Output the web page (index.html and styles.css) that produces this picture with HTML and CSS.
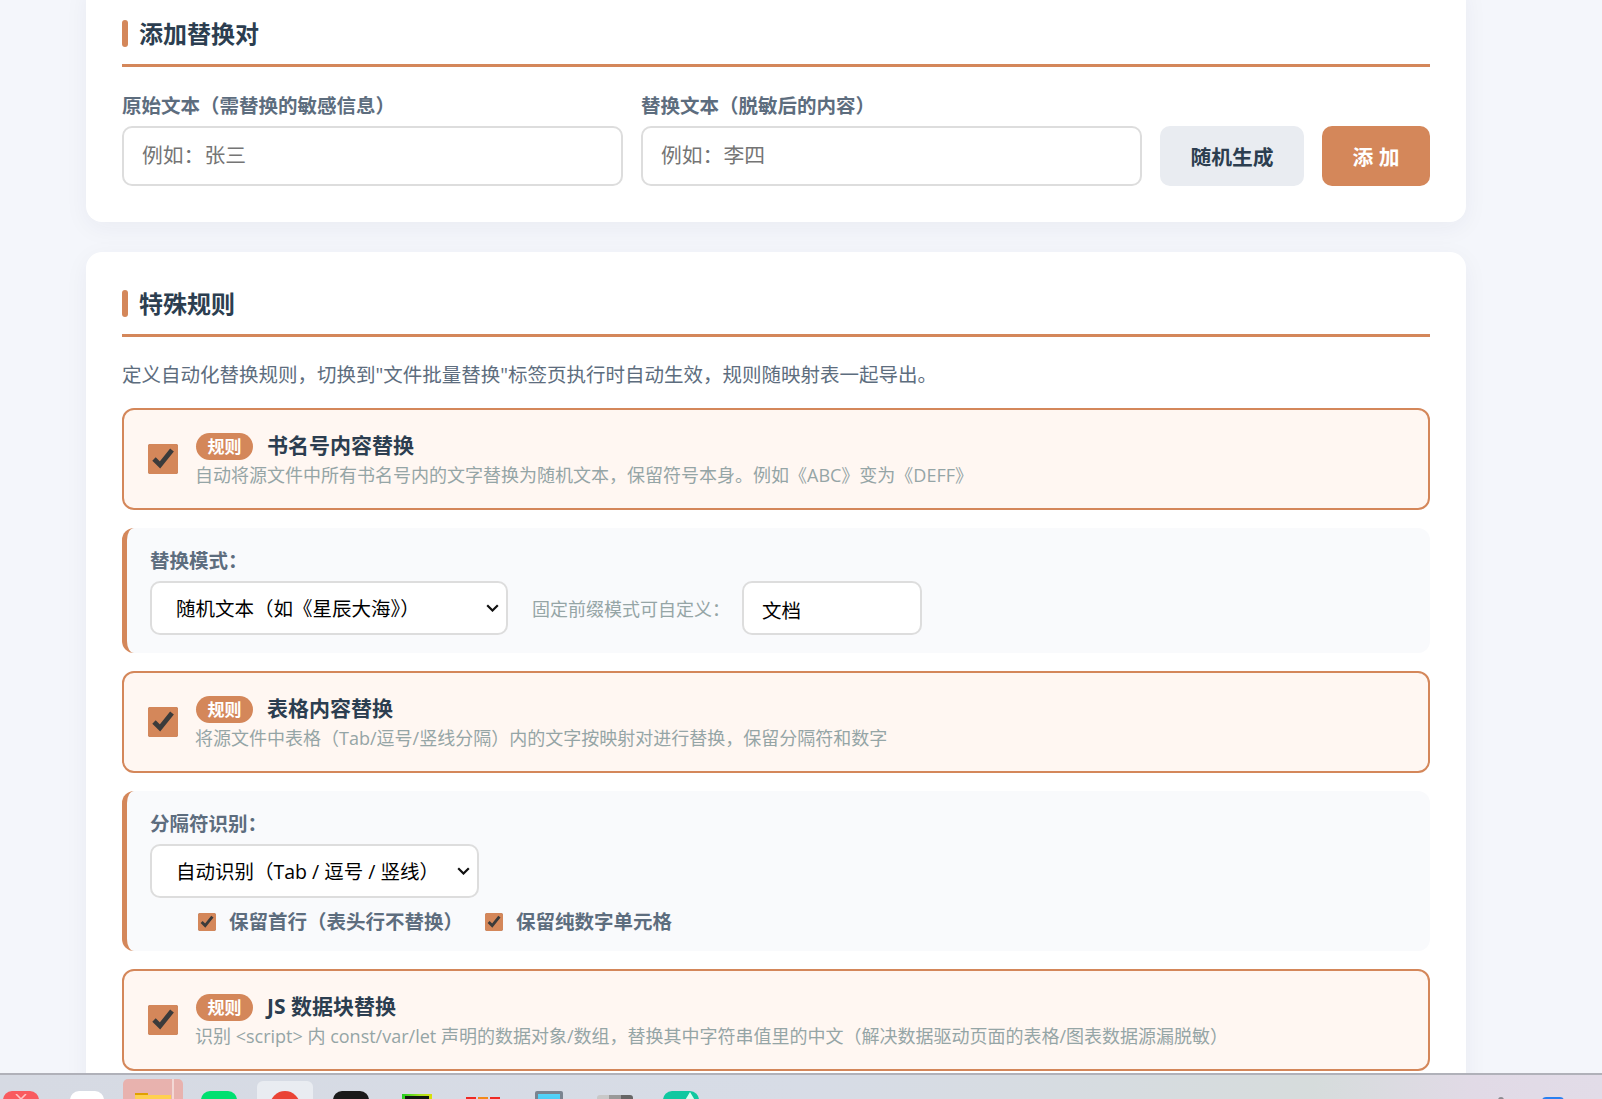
FILE: index.html
```html
<!DOCTYPE html>
<html lang="zh-CN">
<head>
<meta charset="utf-8">
<title>添加替换对</title>
<link rel="stylesheet" href="styles.css">
</head>
<body>
<main class="page">
  <section class="card">
    <h2 class="card-title">添加替换对</h2>
    <div class="pair-row">
      <div class="field">
        <label class="field-label">原始文本（需替换的敏感信息）</label>
        <input class="text-input" type="text" placeholder="例如：张三">
      </div>
      <div class="field">
        <label class="field-label">替换文本（脱敏后的内容）</label>
        <input class="text-input" type="text" placeholder="例如：李四">
      </div>
      <button class="btn btn-muted">随机生成</button>
      <button class="btn btn-primary">添 加</button>
    </div>
  </section>

  <section class="card">
    <h2 class="card-title">特殊规则</h2>
    <p class="intro">定义自动化替换规则，切换到"文件批量替换"标签页执行时自动生效，规则随映射表一起导出。</p>

    <div class="rule">
      <input class="rule-check" type="checkbox" checked>
      <div class="rule-body">
        <div class="rule-head"><span class="badge">规则</span><span class="rule-title">书名号内容替换</span></div>
        <div class="rule-desc">自动将源文件中所有书名号内的文字替换为随机文本，保留符号本身。例如《ABC》变为《DEFF》</div>
      </div>
    </div>

    <div class="options">
      <div class="options-label">替换模式：</div>
      <div class="options-row">
        <select class="select select-mode"><option>随机文本（如《星辰大海》）</option></select>
        <span class="hint">固定前缀模式可自定义：</span>
        <input class="prefix-input" type="text" value="文档">
      </div>
    </div>

    <div class="rule">
      <input class="rule-check" type="checkbox" checked>
      <div class="rule-body">
        <div class="rule-head"><span class="badge">规则</span><span class="rule-title">表格内容替换</span></div>
        <div class="rule-desc">将源文件中表格（Tab/逗号/竖线分隔）内的文字按映射对进行替换，保留分隔符和数字</div>
      </div>
    </div>

    <div class="options">
      <div class="options-label">分隔符识别：</div>
      <select class="select select-sep"><option>自动识别（Tab / 逗号 / 竖线）</option></select>
      <div class="checks">
        <label class="check-item"><input class="small-check" type="checkbox" checked>保留首行（表头行不替换）</label>
        <label class="check-item"><input class="small-check" type="checkbox" checked>保留纯数字单元格</label>
      </div>
    </div>

    <div class="rule">
      <input class="rule-check" type="checkbox" checked>
      <div class="rule-body">
        <div class="rule-head"><span class="badge">规则</span><span class="rule-title">JS 数据块替换</span></div>
        <div class="rule-desc">识别 &lt;script&gt; 内 const/var/let 声明的数据对象/数组，替换其中字符串值里的中文（解决数据驱动页面的表格/图表数据源漏脱敏）</div>
      </div>
    </div>
  </section>
</main>

<footer class="taskbar">
  <div class="slot"><div class="app app-red"><svg class="app-mark" viewBox="0 0 14 6" width="14" height="6"><path d="M2 0l5 5 5-5" fill="none" stroke="#ffc4c4" stroke-width="1.6"/></svg></div></div>
  <div class="slot"><div class="app app-white"></div></div>
  <div class="slot"><div class="tile-active"><div class="folder"></div></div></div>
  <div class="slot"><div class="app app-green"></div></div>
  <div class="slot"><div class="tile-hover"><div class="record"></div></div></div>
  <div class="slot"><div class="app app-black"></div></div>
  <div class="slot"><div class="app-frame"></div></div>
  <div class="slot"><div class="app-flag"><span class="flag-red"></span><span class="flag-orange"></span><span class="flag-red"></span></div></div>
  <div class="slot"><div class="app-monitor"></div></div>
  <div class="slot"><div class="app-strips"><span class="strip-a"></span><span class="strip-b"></span><span class="strip-c"></span></div></div>
  <div class="slot"><div class="app app-teal"><svg class="app-tri" viewBox="0 0 12 10" width="12" height="10"><path d="M6 0L12 10H0z" fill="#d8fff0"/></svg></div></div>
  <div class="tray">
    <span class="tray-dot"></span>
    <span class="tray-blue"></span>
  </div>
</footer>
</body>
</html>
```
FILE: styles.css
```css
* { box-sizing: border-box; }

html, body {
  margin: 0;
  height: 100%;
  overflow: hidden;
}

body {
  background: #f4f6fb;
  font-family: "Open Sans", "Noto Sans CJK SC", sans-serif;
  color: #2c3e50;
}

/* the page is scrolled a little: the first card starts above the window */
.page {
  height: calc(100vh + 18px);
  margin-top: -18px;
  padding: 0 136px 0 86px;
  overflow: hidden;
}

.card {
  background: #fff;
  border-radius: 16px;
  padding: 36px;
  margin-bottom: 30px;
  box-shadow: 0 6px 24px rgba(30, 40, 70, 0.05);
}

.card-title {
  display: flex;
  align-items: center;
  gap: 11px;
  margin: 0 0 24px;
  height: 49px;
  padding-bottom: 15px;
  border-bottom: 3px solid #d4875a;
  font-size: 24px;
  font-weight: 700;
  line-height: 31px;
  color: #2c3e50;
}

.card-title::before {
  content: "";
  width: 6px;
  height: 27px;
  border-radius: 3px;
  background: #d4875a;
}

.pair-row {
  display: flex;
  align-items: flex-end;
  gap: 18px;
}

.field {
  flex: 1;
  min-width: 0;
}

.field-label {
  display: block;
  margin-bottom: 5px;
  font-size: 19.5px;
  font-weight: 700;
  line-height: 30px;
  color: #5d6d7e;
}

.text-input {
  display: block;
  width: 100%;
  height: 60px;
  padding: 0 18px 2px;
  border: 2px solid #ddd;
  border-radius: 10px;
  font: inherit;
  font-size: 20.8px;
  background: #fff;
}

.btn {
  flex: none;
  height: 60px;
  padding: 0;
  border: 0;
  border-radius: 10px;
  font: inherit;
  font-size: 20.8px;
  font-weight: 700;
  white-space: nowrap;
}

.btn-muted { width: 144px; background: #e9ecf1; color: #2c3e50; }
.btn-primary { width: 108px; background: #d4875a; color: #fff; }

.intro {
  margin: 0 0 19px;
  font-size: 19.5px;
  line-height: 28px;
  color: #5d6d7e;
}

.rule {
  display: flex;
  align-items: center;
  gap: 18px;
  padding: 20px 24px;
  margin-bottom: 18px;
  border: 2px solid #d4875a;
  border-radius: 12px;
  background: #fff7f2;
}

.rule-check {
  flex: none;
  width: 30px;
  height: 30px;
  margin: 0;
  accent-color: #d4875a;
}

.rule-head {
  display: flex;
  align-items: center;
  gap: 14px;
  height: 32px;
}

.badge {
  padding: 0 11.5px;
  height: 27px;
  border-radius: 14px;
  background: #d4875a;
  color: #fff;
  font-size: 17px;
  font-weight: 700;
  line-height: 27px;
}

.rule-title {
  padding-bottom: 1px;
  font-size: 21px;
  font-weight: 700;
  line-height: 31px;
  color: #2c3e50;
}

.rule-desc {
  margin-left: -1px;
  font-size: 18px;
  line-height: 26px;
  color: #95a5a6;
}

.options {
  padding: 19px 24px 17px 23px;
  margin-bottom: 18px;
  border-left: 5px solid #d4875a;
  border-radius: 12px;
  background: #f9fafc;
}

.options-label {
  margin-bottom: 6px;
  font-size: 19.5px;
  font-weight: 700;
  line-height: 28px;
  color: #5d6d7e;
}

.options-row {
  display: flex;
  align-items: center;
  margin-bottom: 1px;
}

.select {
  display: block;
  height: 54px;
  padding: 0 30px 0 24px;
  border: 2px solid #ddd;
  border-radius: 10px;
  appearance: none;
  background: #fff url("data:image/svg+xml,%3Csvg xmlns='http://www.w3.org/2000/svg' viewBox='0 0 13 8'%3E%3Cpath d='M1.2 1.2l5.3 5.3 5.3-5.3' fill='none' stroke='%23111' stroke-width='2.2'/%3E%3C/svg%3E") no-repeat right 7px center / 13px 8px;
  color: #000;
  font: inherit;
  font-size: 19.5px;
}

.select-mode { width: 358px; }
.select-sep { width: 329px; }

.hint {
  margin-left: 24px;
  font-size: 18px;
  color: #95a5a6;
}

.prefix-input {
  width: 180px;
  height: 54px;
  margin-left: 12px;
  padding: 2px 18px 0;
  border: 2px solid #ddd;
  border-radius: 10px;
  background: #fff;
  color: #000;
  font: inherit;
  font-size: 19.5px;
}

.checks {
  display: flex;
  gap: 22px;
  margin-top: 12px;
  padding-left: 48px;
  height: 24px;
}

.check-item {
  display: flex;
  align-items: center;
  gap: 13px;
  font-size: 19.5px;
  font-weight: 700;
  line-height: 24px;
  color: #5d6d7e;
}

.small-check {
  width: 18px;
  height: 18px;
  margin: 0;
  accent-color: #d4875a;
}

/* taskbar overlays the page at the bottom of the window */
.taskbar {
  position: fixed;
  left: 0;
  right: 0;
  bottom: 0;
  height: 26px;
  display: flex;
  overflow: hidden;
  border-top: 2px solid #b0b1b9;
  background: linear-gradient(90deg, #d6dae3 0%, #d7dce6 50%, #d6dcdc 82%, #e1dae6 92%, #e2dce8 100%);
}

.slot {
  flex: none;
  width: 66px;
  display: flex;
  justify-content: center;
}

.slot:first-child { margin-left: -12px; }

.app {
  width: 36px;
  height: 36px;
  margin-top: 16px;
  border-radius: 9px;
  position: relative;
  flex: none;
}

.app-red { background: #f95b5f; }
.app-white { width: 34px; background: #fff; }
.app-green { background: #00e070; }
.app-black { background: #1a1a1a; }
.app-teal { background: #10c8a0; }

.app-mark { position: absolute; left: 11px; top: 3px; }
.app-tri { position: absolute; left: 21px; top: 1px; }

.tile-active {
  flex: none;
  width: 60px;
  height: 40px;
  margin-top: 4px;
  border-radius: 5px;
  background: linear-gradient(90deg, #e8b2ae 49px, #f3d8d5 49px 51px, #e8b2ae 51px);
  padding: 14px 0 0 12px;
}

.folder {
  width: 36px;
  height: 30px;
  background: linear-gradient(180deg, #e0a000 2px, #ffd050 2px);
  clip-path: polygon(0 0, 36% 0, 36% 2px, 100% 2px, 100% 100%, 0 100%);
}

.tile-hover {
  flex: none;
  width: 56px;
  height: 40px;
  margin-top: 6px;
  border-radius: 6px;
  background: #e9ecf1;
  padding: 10px 0 0 13px;
}

.record {
  width: 30px;
  height: 30px;
  border-radius: 50%;
  background: #ea4335;
}

.app-frame {
  flex: none;
  width: 30px;
  height: 30px;
  margin-top: 19px;
  padding: 2px 3px;
  background: linear-gradient(100deg, #20d020 0%, #a0e020 50%, #f0e000 100%);
}

.app-frame::before {
  content: "";
  display: block;
  height: 100%;
  background: #101810;
}

.app-flag {
  flex: none;
  display: flex;
  gap: 2px;
  width: 34px;
  height: 20px;
  margin-top: 22px;
}

.flag-red { flex: 1; background: #ee2a24; }
.flag-orange { flex: 1; background: #f28a1a; }

.app-monitor {
  flex: none;
  width: 28px;
  height: 30px;
  margin-top: 16px;
  padding: 3px;
  border-radius: 2px;
  background: #7a8490;
}

.app-monitor::before {
  content: "";
  display: block;
  height: 100%;
  background: linear-gradient(180deg, #55d4f8, #30b4ee);
}

.app-strips {
  flex: none;
  display: flex;
  width: 36px;
  height: 20px;
  margin-top: 20px;
  border-radius: 3px 3px 0 0;
  overflow: hidden;
}

.strip-a, .strip-b, .strip-c { flex: 1; }
.strip-a { background: #c8c8c8; }
.strip-b { background: #999; }
.strip-c { background: #666; }

.tray {
  position: absolute;
  right: 38px;
  top: 0;
  display: flex;
  gap: 38px;
}

.tray-dot {
  width: 6px;
  height: 6px;
  margin-top: 22px;
  border-radius: 50%;
  background: #8a8a90;
}

.tray-blue {
  width: 22px;
  height: 12px;
  margin-top: 22px;
  border-radius: 4px 4px 0 0;
  background: #2a80f0;
}
```
